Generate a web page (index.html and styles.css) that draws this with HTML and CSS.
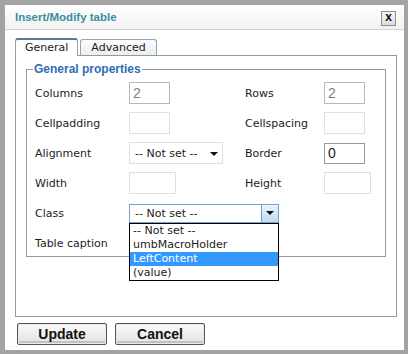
FILE: index.html
```html
<!DOCTYPE html>
<html lang="en">

<head>
    <meta charset="UTF-8">
    <title>Insert/Modify table</title>
    <link rel="stylesheet" href="styles.css">
</head>

<body>
    <div class="dialog">
        <div class="titlebar">
            <span class="title">Insert/Modify table</span>
            <span class="close">x</span>
        </div>

        <div class="content">
            <div class="tabs">
                <span class="tab current">General</span>
                <span class="tab">Advanced</span>
            </div>

            <div class="panel">
                <fieldset>
                    <legend>General properties</legend>
                    <div class="grid">
                        <label>Columns</label>
                        <div><input class="txt dim w40" value="2"></div>
                        <label>Rows</label>
                        <div><input class="txt dim w40" value="2"></div>

                        <label>Cellpadding</label>
                        <div><input class="txt light w40" value=""></div>
                        <label>Cellspacing</label>
                        <div><input class="txt light w40" value=""></div>

                        <label>Alignment</label>
                        <div><span class="sel">-- Not set --<i class="arrow"></i></span></div>
                        <label>Border</label>
                        <div><input class="txt dark w40" value="0"></div>

                        <label>Width</label>
                        <div><input class="txt light w46" value=""></div>
                        <label>Height</label>
                        <div><input class="txt light w46" value=""></div>

                        <label class="short">Class</label>
                        <div class="short">
                            <div class="combo">
                                <span class="sel focus">-- Not set --<span class="btn"><i class="arrow"></i></span></span>
                                <ul class="list">
                                    <li>-- Not set --</li>
                                    <li>umbMacroHolder</li>
                                    <li class="hi">LeftContent</li>
                                    <li>(value)</li>
                                </ul>
                            </div>
                        </div>
                        <span class="short"></span>
                        <span class="short"></span>

                        <label class="short">Table caption</label>
                        <span class="short"></span>
                        <span class="short"></span>
                        <span class="short"></span>
                    </div>
                </fieldset>
            </div>

            <div class="buttons">
                <button>Update</button>
                <button>Cancel</button>
            </div>
        </div>
    </div>
</body>

</html>
```

FILE: styles.css
```css
* {
    margin: 0;
    padding: 0;
    box-sizing: border-box;
}

body {
    background-color: #a3a3a3;
    padding: 5px 4px 4px 5px;
    font-family: "DejaVu Sans", Verdana, sans-serif;
    font-size: 11px;
    color: #1c1c1c;
}

.dialog {
    width: 399px;
    height: 345px;
    background-color: white;
}

.titlebar {
    height: 25px;
    display: flex;
    align-items: center;
    justify-content: space-between;
    padding: 0 8px 0 10px;
    background: linear-gradient(#ffffff, #f1f1f1);
    border-bottom: 1px solid #d4d4d4;
}

.title {
    font-family: "Liberation Sans", Arial, sans-serif;
    font-weight: bold;
    font-size: 11.5px;
    color: #3a8f9c;
}

.close {
    width: 15px;
    height: 15px;
    margin-top: 2px;
    border: 1px solid #8a8f96;
    background: linear-gradient(#f6f6f6, #d9dde2);
    font-family: "Liberation Sans", Arial, sans-serif;
    font-weight: bold;
    font-size: 12px;
    line-height: 11px;
    text-align: center;
    color: #111;
}

.content {
    padding: 8px 7px 0 10px;
}

.tabs {
    display: flex;
    align-items: flex-end;
    gap: 2px;
    height: 17px;
}

.tab {
    height: 16px;
    padding: 0 10px;
    border: 1px solid #98a2a8;
    border-bottom: none;
    border-radius: 3px 3px 0 0;
    background: linear-gradient(#fcfcfc, #eceeef);
    font-size: 11px;
    line-height: 15px;
}

.tab.current {
    height: 18px;
    margin-bottom: -1px;
    padding: 0 9px;
    border-top: 2px solid #5a7893;
    background: white;
    position: relative;
    line-height: 16px;
}

.panel {
    width: 382px;
    height: 262px;
    border: 1px solid #919b9c;
    padding: 6px 10px 0 10px;
}

fieldset {
    border: 1px solid #919b9c;
    padding: 2px 0 0 8px;
    height: 195px;
}

legend {
    font-family: "Liberation Sans", Arial, sans-serif;
    font-weight: bold;
    font-size: 12px;
    color: #2f6eb4;
    padding: 0 1px;
    margin-left: -2px;
}

.grid {
    display: grid;
    grid-template-columns: 94px 116px 79px auto;
    grid-auto-rows: 30px;
    align-items: center;
}

.grid .short {
    height: 28px;
    display: flex;
    align-items: center;
}

.txt {
    height: 22px;
    border: 1px solid #b4b9bd;
    padding: 0 3px;
    font-family: "Liberation Sans", Arial, sans-serif;
    font-size: 14px;
    color: #1c1c1c;
    display: block;
}

.w40 {
    width: 41px;
}

.w46 {
    width: 47px;
}

.dim {
    color: #808080;
}

.light {
    border-color: #dde0e4;
}

.dark {
    border-color: #9a9a9a;
    height: 21px;
}

.sel {
    display: flex;
    align-items: center;
    width: 94px;
    height: 22px;
    border: 1px solid #dde0e4;
    padding-left: 5px;
    position: relative;
    font-size: 11px;
}

.arrow {
    position: absolute;
    right: 4px;
    top: 9px;
    width: 0;
    height: 0;
    border-left: 4px solid transparent;
    border-right: 4px solid transparent;
    border-top: 4px solid #111;
}

.combo {
    position: relative;
}

.sel.focus {
    width: 150px;
    height: 19px;
    border-color: #7f9fc4;
}

.btn {
    position: absolute;
    right: 0;
    top: 0;
    width: 17px;
    height: 17px;
    border-left: 1px solid #7f9fc4;
    background: linear-gradient(#eaf4fd, #bcdcf7);
}

.btn .arrow {
    right: 4px;
    top: 6px;
}

.list {
    position: absolute;
    left: 0;
    top: 19px;
    width: 150px;
    list-style: none;
    background: white;
    border: 1px solid #000;
    z-index: 2;
}

.list li {
    height: 14px;
    line-height: 14px;
    padding-left: 3px;
    font-size: 11px;
}

.list li.hi {
    background-color: #3399ff;
    color: white;
}

.buttons {
    display: flex;
    gap: 8px;
    padding: 6px 0 0 2px;
}

button {
    width: 90px;
    height: 22px;
    border: 1px solid #555;
    border-radius: 2px;
    box-shadow: inset 0 0 0 1px #e9e9e9, inset 0 -2px 0 1px #c2c2c2;
    background: linear-gradient(#fbfbfb, #e2e2e2);
    font-family: "Liberation Sans", Arial, sans-serif;
    font-weight: bold;
    font-size: 14px;
    color: #111;
}
```
